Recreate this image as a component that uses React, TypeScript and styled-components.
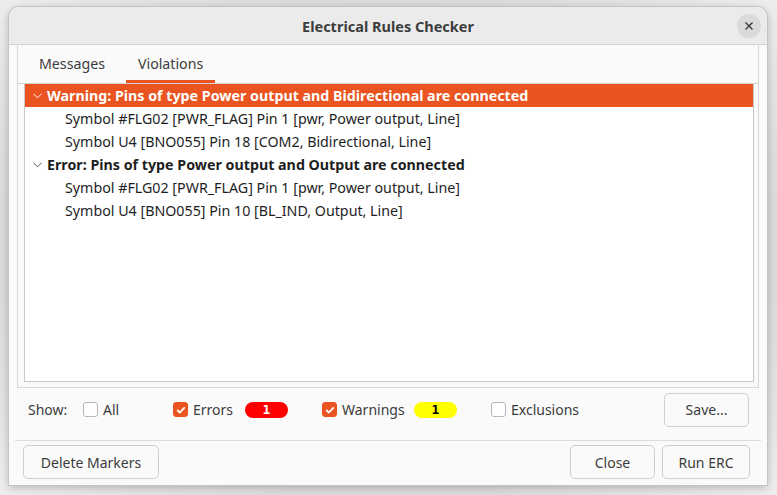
import React from 'react';
import styled, { createGlobalStyle } from 'styled-components';

const GlobalStyle = createGlobalStyle`
  html, body {
    margin: 0;
    padding: 0;
    background: #e6e6e6;
    font-family: 'Noto Sans', 'Open Sans', sans-serif;
    color: #3c3c3c;
  }
`;

const orange = '#e95420';

const Screen = styled.div`
  width: 777px;
  height: 495px;
  padding: 7px 10px 10px 9px;
  box-sizing: border-box;
  background: radial-gradient(ellipse at center, #d4d4d4 60%, #eeeeee 100%);
`;

const Window = styled.div`
  height: 478px;
  display: flex;
  flex-direction: column;
  background: #fafafa;
  border-radius: 10px 10px 0 0;
  box-shadow: 0 0 0 1px #c4c4c4, 0 2px 8px rgba(0, 0, 0, 0.25);
  overflow: hidden;
`;

const TitleBar = styled.div`
  height: 37px;
  flex: none;
  display: flex;
  align-items: center;
  justify-content: center;
  position: relative;
  background: #ebebeb;
  border-bottom: 1px solid #d2d2d2;
  font-size: 14.5px;
  font-weight: 700;
  color: #3d3d3d;
`;

const CloseDot = styled.button`
  position: absolute;
  right: 6px;
  top: 7px;
  width: 24px;
  height: 24px;
  border-radius: 50%;
  border: none;
  background: #dadada;
  display: flex;
  align-items: center;
  justify-content: center;
  padding: 0;
`;

const Notebook = styled.div`
  margin: 0 8px 0 8px;
  height: 342px;
  flex: none;
  display: flex;
  flex-direction: column;
  border-left: 1px solid #d8d8d8;
  border-right: 1px solid #d8d8d8;
  border-bottom: 1px solid #d8d8d8;
  background: #fafafa;
`;

const TabRow = styled.div`
  height: 38px;
  flex: none;
  display: flex;
  gap: 9px;
  padding-left: 9px;
  border-bottom: 1px solid #d4d4d4;
`;

const Tab = styled.div<{ $active?: boolean }>`
  padding: 2px 12px 0;
  display: flex;
  align-items: center;
  font-size: 14.2px;
  color: #3c3c3c;
  box-sizing: border-box;
  border-bottom: 3px solid ${(p) => (p.$active ? orange : 'transparent')};
`;

const ListBox = styled.div`
  margin: 0 4px 5px 6px;
  flex: 1;
  background: #ffffff;
  border: 1px solid #c8c8c8;
  border-top: none;
`;

const Row = styled.div<{ $selected?: boolean; $child?: boolean }>`
  height: 23px;
  display: flex;
  align-items: center;
  padding-left: ${(p) => (p.$child ? '40px' : '8px')};
  background: ${(p) => (p.$selected ? orange : 'transparent')};
  color: ${(p) => (p.$selected ? '#ffffff' : '#1e1e1e')};
  font-size: 14.25px;
  white-space: nowrap;
`;

const Heading = styled.span`
  font-weight: 700;
  margin-left: 5px;
`;

const ShowRow = styled.div`
  height: 53px;
  flex: none;
  display: flex;
  align-items: center;
  box-sizing: border-box;
  padding: 0 12px 9px 13px;
  margin: 0 6px;
  font-size: 14px;
  color: #3c3c3c;
  border-bottom: 1px solid #dcdcdc;
`;

const Label = styled.span<{ $w?: number }>`
  display: inline-block;
  width: ${(p) => (p.$w ? `${p.$w}px` : 'auto')};
`;

const Check = styled.span<{ $on?: boolean }>`
  width: 15px;
  height: 15px;
  border-radius: 3px;
  box-sizing: border-box;
  border: 1px solid ${(p) => (p.$on ? orange : '#b8b8b8')};
  background: ${(p) => (p.$on ? orange : '#ffffff')};
  display: inline-flex;
  align-items: center;
  justify-content: center;
  margin-right: 5px;
  flex: none;
`;

const CheckItem = styled.label<{ $w: number }>`
  display: flex;
  align-items: center;
  width: ${(p) => p.$w}px;
  flex: none;
`;

const Badge = styled.span<{ $bg: string; $fg: string }>`
  width: 43px;
  height: 16px;
  border-radius: 8px;
  background: ${(p) => p.$bg};
  color: ${(p) => p.$fg};
  font-family: 'DejaVu Sans Mono', monospace;
  font-weight: 700;
  font-size: 13px;
  display: inline-flex;
  align-items: center;
  justify-content: center;
  margin-left: auto;
  margin-right: 34px;
`;

const Button = styled.button<{ $w: number }>`
  width: ${(p) => p.$w}px;
  height: 34px;
  border: 1px solid #cfcfcf;
  border-radius: 5px;
  background: #fafafa;
  font-family: 'Noto Sans', 'Open Sans', sans-serif;
  font-size: 14px;
  color: #3c3c3c;
  padding: 0;
`;

const Spacer = styled.div`
  flex: 1;
`;

const Footer = styled.div`
  flex: 1;
  display: flex;
  align-items: center;
  gap: 7px;
  padding: 0 17px 2px 14px;
`;

const Chevron: React.FC<{ color: string }> = ({ color }) => (
  <svg width="9" height="6" viewBox="0 0 9 6">
    <path d="M0.5 0.8 L4.5 4.8 L8.5 0.8" fill="none" stroke={color} strokeWidth="1" />
  </svg>
);

const Tick = () => (
  <svg width="10" height="8" viewBox="0 0 10 8">
    <path d="M1.2 4 L3.8 6.5 L8.8 1.3" fill="none" stroke="#fff" strokeWidth="1.8" />
  </svg>
);

const groups = [
  {
    title: 'Warning: Pins of type Power output and Bidirectional are connected',
    selected: true,
    items: [
      'Symbol #FLG02 [PWR_FLAG] Pin 1 [pwr, Power output, Line]',
      'Symbol U4 [BNO055] Pin 18 [COM2, Bidirectional, Line]',
    ],
  },
  {
    title: 'Error: Pins of type Power output and Output are connected',
    selected: false,
    items: [
      'Symbol #FLG02 [PWR_FLAG] Pin 1 [pwr, Power output, Line]',
      'Symbol U4 [BNO055] Pin 10 [BL_IND, Output, Line]',
    ],
  },
];

const App: React.FC = () => (
  <Screen>
    <GlobalStyle />
    <Window>
      <TitleBar>
        Electrical Rules Checker
        <CloseDot>
          <svg width="10" height="10" viewBox="0 0 10 10">
            <path d="M1.5 1.5 L8.5 8.5 M8.5 1.5 L1.5 8.5" stroke="#3a3a3a" strokeWidth="1.4" />
          </svg>
        </CloseDot>
      </TitleBar>
      <Notebook>
        <TabRow>
          <Tab>Messages</Tab>
          <Tab $active>Violations</Tab>
        </TabRow>
        <ListBox>
          {groups.map((g) => (
            <React.Fragment key={g.title}>
              <Row $selected={g.selected}>
                <Chevron color={g.selected ? '#ffffff' : '#555555'} />
                <Heading>{g.title}</Heading>
              </Row>
              {g.items.map((it) => (
                <Row $child key={it}>
                  {it}
                </Row>
              ))}
            </React.Fragment>
          ))}
        </ListBox>
      </Notebook>
      <ShowRow>
        <Label $w={55}>Show:</Label>
        <CheckItem $w={90}>
          <Check />
          All
        </CheckItem>
        <CheckItem $w={149}>
          <Check $on>
            <Tick />
          </Check>
          Errors
          <Badge $bg="#ff0000" $fg="#ffffff">1</Badge>
        </CheckItem>
        <CheckItem $w={169}>
          <Check $on>
            <Tick />
          </Check>
          Warnings
          <Badge $bg="#ffff00" $fg="#000000">1</Badge>
        </CheckItem>
        <CheckItem $w={120}>
          <Check />
          Exclusions
        </CheckItem>
        <Spacer />
        <Button $w={85}>Save...</Button>
      </ShowRow>
      <Footer>
        <Button $w={136}>Delete Markers</Button>
        <Spacer />
        <Button $w={85}>Close</Button>
        <Button $w={88}>Run ERC</Button>
      </Footer>
    </Window>
  </Screen>
);

export default App;
